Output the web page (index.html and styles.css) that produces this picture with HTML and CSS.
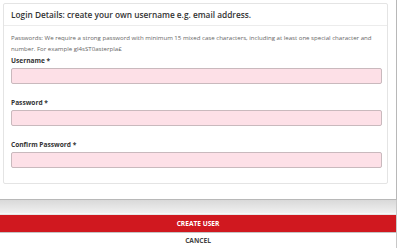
FILE: index.html
```html
<!DOCTYPE html>
<html lang="en">
  <head>
    <meta charset="UTF-8" />
    <meta name="viewport" content="width=device-width, initial-scale=1.0" />
    <title>Create User</title>
    <link rel="stylesheet" href="styles.css">
  </head>

  <body>
    <div class="page">
      <div class="scroll-area">
        <div class="card">
          <div class="card-header">
            <h2>Login Details: create your own username e.g. email address.</h2>
          </div>
          <div class="card-body">
            <p class="hint">
              Passwords: We require a strong password with minimum 15 mixed case characters, including at least one special character
              and number. For example gl4sST0asterpla£
            </p>

            <div class="field">
              <label for="username">Username *</label>
              <input type="text" id="username" class="input">
            </div>
            <div class="field">
              <label for="password">Password *</label>
              <input type="password" id="password" class="input">
            </div>
            <div class="field">
              <label for="confirm-password">Confirm Password *</label>
              <input type="password" id="confirm-password" class="input">
            </div>
          </div>
        </div>
      </div>

      <div class="actions">
        <button class="btn btn-create">CREATE USER</button>
        <button class="btn btn-cancel">CANCEL</button>
      </div>
    </div>
  </body>
</html>
```

FILE: styles.css
```css
body,
html {
  margin: 0;
  padding: 0;
  font-family: "Open Sans", Arial, sans-serif;
  background-color: white;
  color: #333;
}

.page {
  width: 397px;
  height: 248px;
  display: flex;
  flex-direction: column;
  overflow: hidden;
}

.scroll-area {
  height: 200px;
  padding: 3px 8px 0 3px;
  border-right: 1px solid #b8b8b8;
  border-bottom: 1px solid #b8b8b8;
  box-sizing: border-box;
  flex-shrink: 0;
}

.card {
  border: 1px solid #e4e4e4;
  border-radius: 2px;
  background: white;
}

.card-header {
  height: 21px;
  padding: 0 7px;
  border-bottom: 1px solid #ececec;
  display: flex;
  align-items: center;
}

.card-header h2 {
  margin: 0;
  font-size: 8.3px;
  font-weight: 600;
  color: #333;
  white-space: nowrap;
}

.card-body {
  padding: 6px 5px 15px 7px;
}

.hint {
  margin: 0 0 2px 0;
  font-size: 6.1px;
  line-height: 11px;
  color: #666;
}

.field {
  display: flex;
  flex-direction: column;
  margin-bottom: 14px;
}

.field:last-child {
  margin-bottom: 0;
}

.field label {
  font-size: 6.6px;
  font-weight: 700;
  color: #333;
  line-height: 10px;
  margin-bottom: 2px;
}

.input {
  height: 16px;
  box-sizing: border-box;
  border: 1px solid #c9b9bd;
  border-radius: 2px;
  background-color: #fde0e7;
  padding: 0 5px;
  margin: 0;
  font-family: inherit;
}

.actions {
  flex: 1;
  display: flex;
  flex-direction: column;
  padding-top: 14px;
  background: linear-gradient(to bottom, #d9d9d9 0px, #f0f0f0 13px, white 14px);
  border-right: 1px solid #c8c8c8;
}

.btn {
  font-family: inherit;
  font-size: 6.6px;
  font-weight: 700;
  border: none;
  margin: 0;
  padding: 0;
  cursor: pointer;
}

.btn-create {
  height: 17px;
  background-color: #d0181f;
  color: white;
  border-top: 1px solid #e6e6e6;
  border-bottom: 1px solid #c4c4c4;
  box-sizing: content-box;
}

.btn-cancel {
  height: 15px;
  background-color: white;
  color: #444;
}
```
